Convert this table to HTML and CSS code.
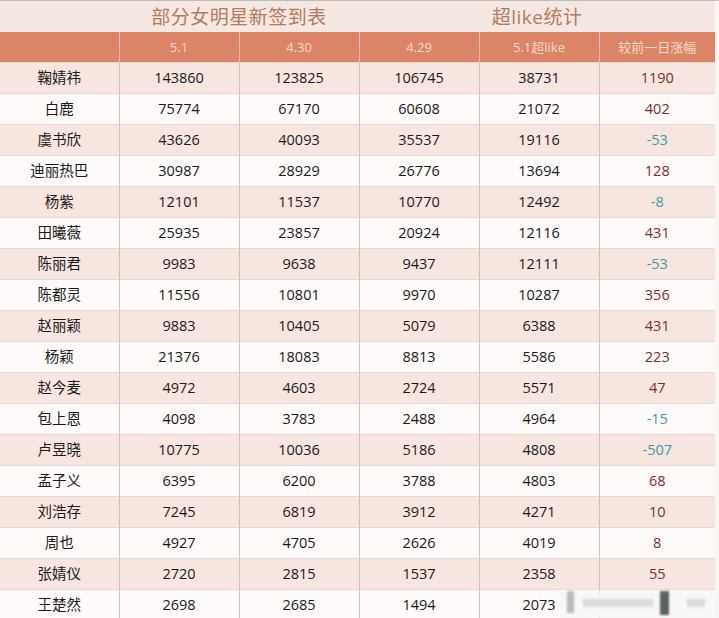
FILE: index.html
```html
<!DOCTYPE html>
<html lang="zh">
<head>
<meta charset="utf-8">
<link rel="stylesheet" href="styles.css">
</head>
<body>
<div class="page">
<table class="sheet">
  <colgroup><col class="c0"><col class="c"><col class="c"><col class="c"><col class="c"><col class="c5"></colgroup>
  <tr class="title">
    <td></td>
    <td colspan="2">部分女明星新签到表</td>
    <td colspan="3">超like统计</td>
  </tr>
  <tr class="head">
    <td></td><td>5.1</td><td>4.30</td><td>4.29</td><td>5.1超like</td><td>较前一日涨幅</td>
  </tr>
  <tr><td>鞠婧祎</td><td>143860</td><td>123825</td><td>106745</td><td>38731</td><td class="up">1190</td></tr>
  <tr><td>白鹿</td><td>75774</td><td>67170</td><td>60608</td><td>21072</td><td class="up">402</td></tr>
  <tr><td>虞书欣</td><td>43626</td><td>40093</td><td>35537</td><td>19116</td><td class="down">-53</td></tr>
  <tr><td>迪丽热巴</td><td>30987</td><td>28929</td><td>26776</td><td>13694</td><td class="up">128</td></tr>
  <tr><td>杨紫</td><td>12101</td><td>11537</td><td>10770</td><td>12492</td><td class="down">-8</td></tr>
  <tr><td>田曦薇</td><td>25935</td><td>23857</td><td>20924</td><td>12116</td><td class="up">431</td></tr>
  <tr><td>陈丽君</td><td>9983</td><td>9638</td><td>9437</td><td>12111</td><td class="down">-53</td></tr>
  <tr><td>陈都灵</td><td>11556</td><td>10801</td><td>9970</td><td>10287</td><td class="up">356</td></tr>
  <tr><td>赵丽颖</td><td>9883</td><td>10405</td><td>5079</td><td>6388</td><td class="up">431</td></tr>
  <tr><td>杨颖</td><td>21376</td><td>18083</td><td>8813</td><td>5586</td><td class="up">223</td></tr>
  <tr><td>赵今麦</td><td>4972</td><td>4603</td><td>2724</td><td>5571</td><td class="up">47</td></tr>
  <tr><td>包上恩</td><td>4098</td><td>3783</td><td>2488</td><td>4964</td><td class="down">-15</td></tr>
  <tr><td>卢昱晓</td><td>10775</td><td>10036</td><td>5186</td><td>4808</td><td class="down">-507</td></tr>
  <tr><td>孟子义</td><td>6395</td><td>6200</td><td>3788</td><td>4803</td><td class="up">68</td></tr>
  <tr><td>刘浩存</td><td>7245</td><td>6819</td><td>3912</td><td>4271</td><td class="up">10</td></tr>
  <tr><td>周也</td><td>4927</td><td>4705</td><td>2626</td><td>4019</td><td class="up">8</td></tr>
  <tr><td>张婧仪</td><td>2720</td><td>2815</td><td>1537</td><td>2358</td><td class="up">55</td></tr>
  <tr><td>王楚然</td><td>2698</td><td>2685</td><td>1494</td><td>2073</td><td class="up"></td></tr>
</table>
<div class="watermark"><span class="wm1"></span><span class="wm2"></span><span class="wm3"></span><span class="wm4"></span></div>
</div>
</body>
</html>
```
FILE: styles.css
```css
html, body {
  margin: 0;
  padding: 0;
  background: #fbf5f2;
}
.page {
  position: relative;
  width: 719px;
  height: 618px;
  overflow: hidden;
  border-top: 1px solid #c4bcb8;
  box-sizing: border-box;
}
.sheet {
  border-collapse: collapse;
  table-layout: fixed;
  width: 715px;
  font-family: "Open Sans", "Noto Sans CJK SC", sans-serif;
  font-size: 14.5px;
  color: #1a1a1a;
}
.c0 { width: 119px; }
.c { width: 120px; }
.c5 { width: 116px; }
.sheet td {
  height: 31px;
  box-sizing: border-box;
  padding: 0;
  line-height: 20px;
  text-align: center;
  vertical-align: middle;
  border-left: 1px solid #cfc3bd;
  border-top: 1px solid #e6d8d2;
  white-space: nowrap;
}
.sheet td:first-child { border-left: none; }
.sheet tr:nth-child(odd) td { background: #f7e6df; }
.sheet tr:nth-child(even) td { background: #fdfaf9; }
.sheet tr.title td {
  background: #f5e7e1;
  border: none;
  height: 31px;
  font-size: 19px;
  color: #b27b60;
  font-weight: 400;
  letter-spacing: 0.5px;
}
.sheet tr.head td {
  background: #db8467;
  color: #f8d8c6;
  font-size: 13px;
  height: 30px;
  border-top: none;
  border-left: 1px solid #ecb7a3;
}
.sheet tr.head td:first-child { border-left: none; }
.sheet td.up { color: #7a2f33; }
.sheet td.down { color: #3c9ba8; }
.watermark {
  position: absolute;
  left: 557px;
  top: 586px;
  width: 156px;
  height: 32px;
}
.watermark::before {
  content: "";
  position: absolute;
  inset: 4px 0 0 4px;
  background: rgba(246, 246, 246, 0.92);
  filter: blur(2px);
}
.watermark span {
  position: absolute;
  filter: blur(1.2px);
}
.wm1 { left: 10px; top: 4px; width: 7px; height: 22px; background: #b8bcbc; }
.wm2 { left: 26px; top: 12px; width: 70px; height: 8px; background: #c9cccc; opacity: 0.6; }
.wm3 { left: 103px; top: 4px; width: 9px; height: 24px; background: #3d4848; opacity: 0.85; }
.wm4 { left: 130px; top: 12px; width: 18px; height: 8px; background: #c9cccc; opacity: 0.6; }
```
